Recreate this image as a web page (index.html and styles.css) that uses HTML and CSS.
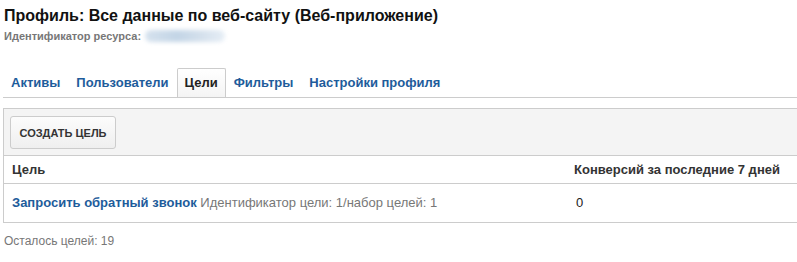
FILE: index.html
```html
<!DOCTYPE html>
<html>
<head>
<meta charset="utf-8">
<link rel="stylesheet" href="styles.css">
</head>
<body>
<div class="page">
  <h1 class="title">Профиль: Все данные по веб-сайту (Веб-приложение)</h1>
  <div class="resource">Идентификатор ресурса: <span class="blur"></span></div>
  <ul class="tabs">
    <li class="tab">Активы</li>
    <li class="tab">Пользователи</li>
    <li class="tab active">Цели</li>
    <li class="tab">Фильтры</li>
    <li class="tab">Настройки профиля</li>
  </ul>
  <div class="panel">
    <div class="toolbar">
      <button class="btn">СОЗДАТЬ ЦЕЛЬ</button>
    </div>
    <div class="row head">
      <div class="c1">Цель</div>
      <div class="c2">Конверсий за последние 7 дней</div>
    </div>
    <div class="row body">
      <div class="c1"><span class="link">Запросить обратный звонок</span> <span class="meta">Идентификатор цели: 1/набор целей: 1</span></div>
      <div class="c2">0</div>
    </div>
  </div>
  <div class="footer">Осталось целей: 19</div>
</div>
</body>
</html>
```
FILE: styles.css
```css
html, body { margin: 0; padding: 0; background: #fff; }
body { font-family: "Liberation Sans", Arial, sans-serif; color: #222; }
.page { padding: 0 0 0 3px; }
.title { margin: 0; padding: 6px 0 0 1px; font-size: 16px; line-height: 20px; font-weight: bold; color: #111; }
.resource { padding: 3px 0 0 1px; font-size: 11px; line-height: 14px; font-weight: bold; color: #777; display: flex; align-items: center; }
.blur { display: inline-block; width: 80px; height: 12px; margin-left: 4px; border-radius: 6px; background: linear-gradient(90deg, #d6e2ee, #c3d5e6 40%, #d4e0ec 70%, #e6eef6); filter: blur(2px); }
.tabs { list-style: none; margin: 25px 0 0 0; padding: 0; display: flex; align-items: flex-end; border-bottom: 1px solid #ccc; height: 29px; }
.tab { padding: 0 8px; font-size: 13px; font-weight: bold; color: #1e5c9b; line-height: 28px; }
.tab.active { padding: 0 7px; color: #222; border: 1px solid #ccc; border-bottom: none; border-radius: 2px 2px 0 0; background: linear-gradient(#fff, #f4f4f4); }
.panel { margin-top: 10px; border: 1px solid #ccc; border-right: none; }
.toolbar { background: #f4f4f4; padding: 7px 6px 6px; border-bottom: 1px solid #ccc; display: flex; }
.btn { font-family: "Liberation Sans", Arial, sans-serif; font-size: 11px; font-weight: bold; color: #333; height: 33px; width: 106px; padding: 0; border: 1px solid #ccc; border-radius: 3px; background: linear-gradient(#fcfcfc, #efefef); }
.row { display: flex; font-size: 13px; }
.row .c1 { width: 562px; padding-left: 8px; }
.row .c2 { flex: 1; }
.head { height: 27px; line-height: 27px; font-weight: bold; color: #333; border-bottom: 1px solid #ccc; }
.body { height: 38px; line-height: 38px; color: #222; }
.body .c2 { padding-left: 2px; }
.link { color: #1e5c9b; font-weight: bold; }
.meta { color: #777; }
.footer { padding: 11px 0 0 1px; font-size: 12px; line-height: 14px; color: #777; }
```
